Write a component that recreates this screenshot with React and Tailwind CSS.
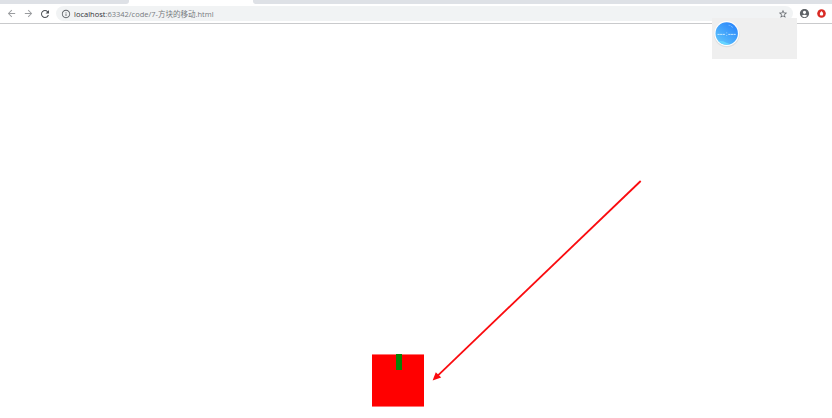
import React from "react";
import { MdArrowBack, MdArrowForward, MdRefresh, MdInfoOutline, MdStarBorder, MdAccountCircle } from "react-icons/md";

function TabStrip() {
  return (
    <div className="flex h-1 bg-white">
      <div className="w-[129px] rounded-br-[3px] bg-[#dee1e6]" />
      <div className="w-[124px]" />
      <div className="flex-1 rounded-bl-[3px] bg-[#dee1e6]" />
    </div>
  );
}

function Toolbar() {
  return (
    <div className="flex h-5 items-center border-b border-[#c9cacc] bg-white pl-[6px] text-[#5f6368]">
      <MdArrowBack className="size-[11px] text-[#9a9c9f]" />
      <MdArrowForward className="ml-[6px] size-[11px] text-[#9a9c9f]" />
      <MdRefresh className="ml-[5px] size-[12px] text-[#4b4f54]" />
      <div className="ml-[5px] flex h-[15px] w-[737px] items-center rounded-full bg-[#f1f3f4] pl-[5px]">
        <MdInfoOutline className="size-[10px]" />
        <div className="ml-[3px] whitespace-nowrap font-['Open_Sans','Noto_Sans_CJK_SC',sans-serif] text-[7.5px] leading-[14px] text-[#777b80]">
          <span className="text-[#303236]">localhost</span>:63342/code/7-方块的移动.html
        </div>
        <MdStarBorder className="ml-auto mr-[5px] size-[10px]" />
      </div>
      <MdAccountCircle className="ml-[6px] size-[11px]" />
      <svg className="ml-[7px] size-[9px]" viewBox="0 0 9 9">
        <circle cx="4.5" cy="4.5" r="4.3" fill="#d92b25" />
        <path d="M4.5 2 L6.1 3.9 V5.7 L5.5 6.5 H3.5 L2.9 5.7 V3.9Z" fill="#fff" />
      </svg>
    </div>
  );
}

function FloatingPanel() {
  return (
    <div className="absolute left-[712px] top-[18px] h-[41px] w-[85px] bg-[#efefef] pl-[2px] pt-[3px]">
      <svg className="block h-[28px] w-[27px] overflow-visible" viewBox="0 0 27 28">
        <defs>
          <linearGradient id="sky" x1="0.85" y1="0.1" x2="0.2" y2="0.9">
            <stop offset="0" stopColor="#2b87fb" />
            <stop offset="1" stopColor="#5bc0fc" />
          </linearGradient>
          <clipPath id="disc">
            <circle cx="12.7" cy="12.5" r="11.2" />
          </clipPath>
        </defs>
        <circle cx="12.8" cy="13.5" r="12.8" fill="#dededf" />
        <circle cx="12.7" cy="12.5" r="12.4" fill="#fff" />
        <circle cx="12.7" cy="12.5" r="11.2" fill="url(#sky)" />
        <path d="M2 20 Q8 19 13 22 T25 20 V26 H2Z" fill="#65d5ff" clipPath="url(#disc)" />
        <path d="M3.5 13.4 H11 M14.3 13.4 H22" stroke="#d0ecff" strokeWidth="0.9" strokeDasharray="2.2 0.4" />
        <path d="M12.7 11.5 V12.3 M12.7 14 V14.8" stroke="#c5e7ff" strokeWidth="0.7" />
        <path d="M14.5 4.2 L16.5 4.5 M17 5.2 L19 6.5" stroke="#80bcff" strokeWidth="0.8" />
      </svg>
    </div>
  );
}

export default function App() {
  return (
    <div className="relative h-[418px] w-[832px] overflow-hidden bg-white">
      <TabStrip />
      <Toolbar />
      <main className="pl-[372px] pt-[330px]">
        <div className="flex h-[53px] w-[52px] justify-center border-y border-[#ff7272] bg-[#ff0000] bg-clip-padding">
          <div className="-mt-px ml-[2px] h-4 w-[6px] bg-[#078207]" />
        </div>
      </main>
      <FloatingPanel />
      <svg className="pointer-events-none absolute inset-0" width="832" height="418" viewBox="0 0 832 418">
        <path d="M640.7 181 L437 376.3" stroke="#fa0b0f" strokeWidth="1.8" />
        <path d="M432.6 380.4 L435.8 372.2 L438.2 374.6 L441.2 377.6Z" fill="#fa0b0f" />
      </svg>
    </div>
  );
}
